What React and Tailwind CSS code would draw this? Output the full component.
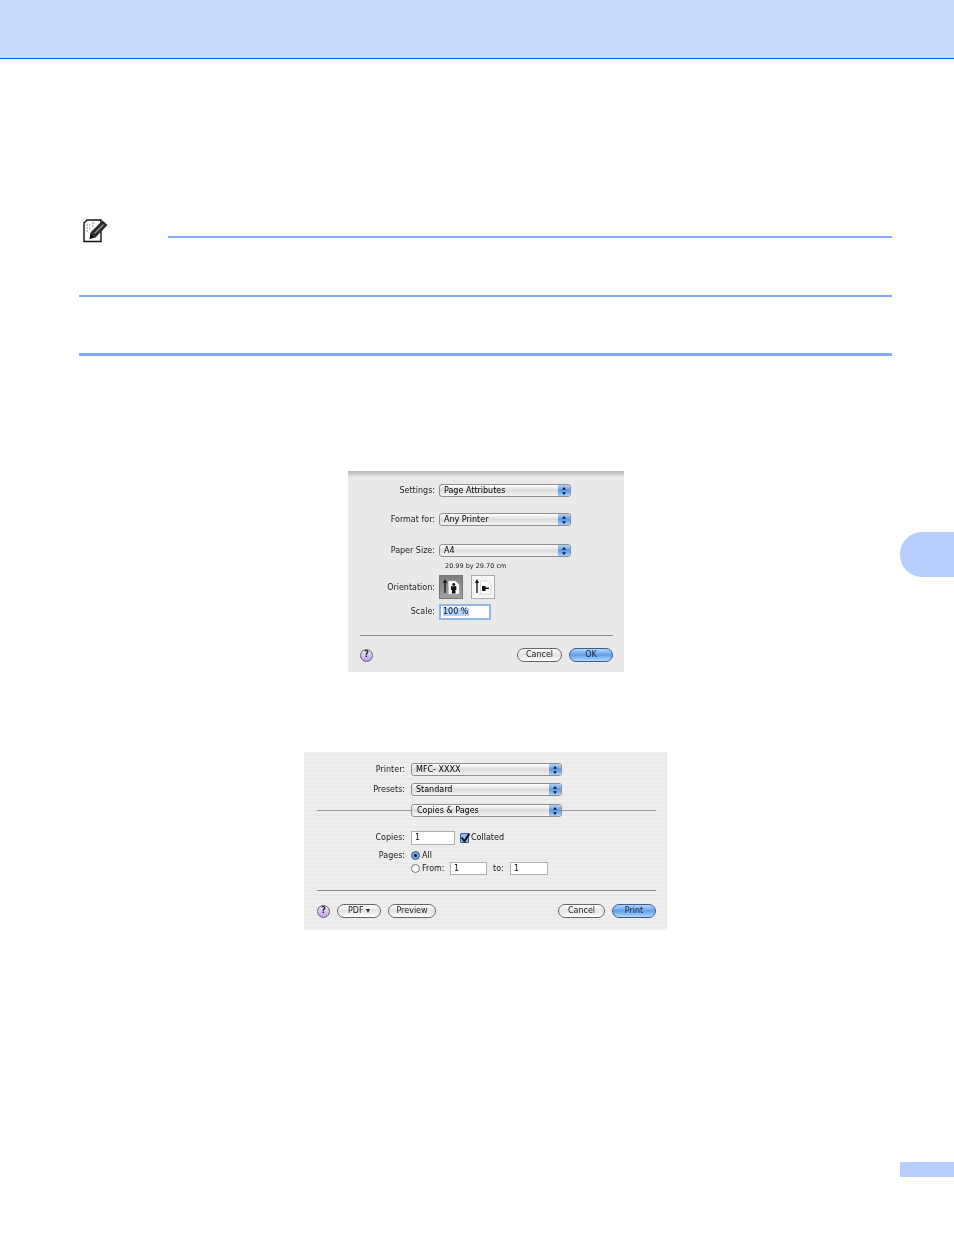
const font = 'font-["DejaVu_Sans",sans-serif]';

function Stepper() {
  return (
    <span className="flex w-[12px] h-full flex-col items-center justify-center rounded-r-[3px] bg-linear-to-b from-[#b3d1f4] via-[#5c9be4] to-[#a8ccf3]">
      <svg width="6" height="10" viewBox="0 0 6 10">
        <path d="M3 1 L5 3.8 H1 Z M3 9 L5 6.2 H1 Z" fill="#0c1a30" />
      </svg>
    </span>
  );
}

function Select({ text, width, pad = 'pl-[4px]' }) {
  return (
    <div
      className={`flex h-[13px] items-center justify-between rounded-[3px] border border-[#8f8f8f] bg-linear-to-b from-white via-[#dcdcdc] to-[#f4f4f4] ${pad} ${width}`}
    >
      <span className="text-[8px] leading-none text-[#000]">{text}</span>
      <Stepper />
    </div>
  );
}

function Label({ children, width, extra }) {
  return <span className={`shrink-0 text-right text-[8px] leading-none text-[#1c1c1c] ${width} ${extra || ''}`}>{children}</span>;
}

function Pill({ children, width, primary }) {
  return (
    <div
      className={`flex h-[14px] items-center justify-center rounded-full border text-[8px] leading-none ${width} ${
        primary
          ? 'border-[#3b5f92] bg-linear-to-b from-[#b8d4f5] via-[#5da0ea] to-[#b5d8fa] text-[#142642]'
          : 'border-[#666] bg-linear-to-b from-white via-[#e4e4e4] to-white text-[#222]'
      }`}
    >
      {children}
    </div>
  );
}

function Help() {
  return (
    <div className="flex h-[13px] w-[13px] shrink-0 items-center justify-center rounded-full border border-[#666] bg-linear-to-b from-[#f3ebfc] to-[#bb9bea] text-[8px] font-bold leading-none text-[#222]">
      ?
    </div>
  );
}

function Field({ children, width, height = 'h-[14px]', focus }) {
  return (
    <div
      className={`flex items-center text-[8px] leading-none text-[#111] bg-white ${height} ${width} ${
        focus ? 'border-2 border-[#8db8ea] pl-[2px]' : 'border border-[#b0b0b0] pl-[3px]'
      }`}
    >
      {children}
    </div>
  );
}

function OrientButton({ active, landscape, extra }) {
  return (
    <div
      className={`flex h-[24px] w-[24px] items-center justify-center border ${extra || ''} ${
        active ? 'border-[#777] bg-linear-to-b from-[#7f7f7f] to-[#a0a0a0]' : 'border-[#aaa] bg-[#f6f6f6]'
      }`}
    >
      <svg width="20" height="18" viewBox="0 0 20 18">
        <path d="M4 15 V4" stroke="#111" strokeWidth="1.3" />
        <path d="M4 1 L6 5 H2 Z" fill="#111" />
        <path d="M7.5 3 H14.5 L18 6.5 V16 H7.5 Z" fill="#fff" stroke="#c4c4c4" strokeWidth="0.6" />
        {landscape ? (
          <path d="M9 8 H12.5 V9.5 H16 V11 H12.5 V13 H9 Z" fill="#111" />
        ) : (
          <g fill="#111">
            <circle cx="12.7" cy="6.5" r="1.4" />
            <path d="M10 8.3 H15.4 V12 H14.5 V15.5 H10.9 V12 H10 Z" />
          </g>
        )}
      </svg>
    </div>
  );
}

function PageDialog() {
  const lw = 'w-[87px]';
  return (
    <div className="ml-[348px] flex h-[201px] w-[276px] flex-col bg-[#e9e9e9] bg-linear-to-b from-[#b5b5b5] from-0% to-[#e9e9e9] to-[3%] pt-[13px]">
      <div className="flex items-center gap-[4px]">
        <Label width={lw}>Settings:</Label>
        <Select text="Page Attributes" width="w-[132px]" />
      </div>
      <div className="mt-[16px] flex items-center gap-[4px]">
        <Label width={lw}>Format for:</Label>
        <Select text="Any Printer" width="w-[132px]" />
      </div>
      <div className="mt-[18px] flex items-center gap-[4px]">
        <Label width={lw}>Paper Size:</Label>
        <Select text="A4" width="w-[132px]" />
      </div>
      <div className="mt-[5px] pl-[97px] text-[6.5px] leading-[8px] text-[#222]">20.99 by 29.70 cm</div>
      <div className="mt-[5px] flex items-center gap-[4px]">
        <Label width={lw} extra="pt-[2px]">Orientation:</Label>
        <OrientButton active />
        <OrientButton landscape extra="ml-[4px]" />
      </div>
      <div className="mt-[5px] flex items-center gap-[4px]">
        <Label width={lw}>Scale:</Label>
        <Field width="w-[52px]" height="h-[16px]" focus>
          <span className="bg-[#b5d3f7] pr-[1px]">100 %</span>
        </Field>
      </div>
      <div className="mx-[12px] mt-[15px] h-px w-[253px] bg-[#8a8a8a]" />
      <div className="mt-[12px] flex items-center justify-between pl-[12px] pr-[11px]">
        <Help />
        <div className="flex gap-[7px]">
          <Pill width="w-[45px]">Cancel</Pill>
          <Pill width="w-[44px]" primary>
            OK
          </Pill>
        </div>
      </div>
    </div>
  );
}

function PrintDialog() {
  const lw = 'w-[101px]';
  return (
    <div className="mt-[80px] ml-[304px] flex h-[178px] w-[363px] flex-col bg-[#eeeeee] bg-[repeating-linear-gradient(0deg,#eeeeee_0,#eeeeee_2px,#eaeaea_2px,#eaeaea_4px)] pt-[11px]">
      <div className="flex items-center gap-[6px]">
        <Label width={lw}>Printer:</Label>
        <Select text="MFC- XXXX" width="w-[151px]" />
      </div>
      <div className="mt-[7px] flex items-center gap-[6px]">
        <Label width={lw}>Presets:</Label>
        <Select text="Standard" width="w-[151px]" />
      </div>
      <div className="mt-[8px] flex items-center pl-[13px] pr-[11px]">
        <div className="h-px flex-1 bg-[#999]" />
        <Select text="Copies &amp; Pages" width="w-[151px]" pad="pl-[5px]" />
        <div className="h-px flex-1 bg-[#999]" />
      </div>
      <div className="mt-[14px] flex items-center gap-[6px]">
        <Label width={lw}>Copies:</Label>
        <Field width="w-[44px]">1</Field>
        <div className="ml-[-1px] flex items-center gap-[2px]">
          <div className="mt-[-1px] flex h-[10px] w-[9px] items-center justify-center rounded-[1px] border border-[#3a5f94] bg-[#8fbaee]">
            <svg width="10" height="10" viewBox="0 0 9 9" className="shrink-0">
              <path d="M1.5 4 L4 7.5 L8.5 0.5" fill="none" stroke="#111" strokeWidth="1.7" />
            </svg>
          </div>
          <span className="text-[8px] leading-none text-[#111]">Collated</span>
        </div>
      </div>
      <div className="mt-[6px] flex items-center gap-[6px]">
        <Label width={lw}>Pages:</Label>
        <div className="flex items-center gap-[2px]">
          <div className="flex h-[9px] w-[9px] items-center justify-center rounded-full border border-[#3a5f94] bg-[#6ea6e8]">
            <div className="h-[3px] w-[3px] rounded-full bg-[#111]" />
          </div>
          <span className="text-[8px] leading-none text-[#111]">All</span>
        </div>
      </div>
      <div className="mt-[2px] flex items-center pl-[107px]">
        <div className="h-[9px] w-[9px] rounded-full border border-[#777] bg-white" />
        <span className="ml-[2px] w-[28px] text-[8px] leading-none text-[#1c1c1c]">From:</span>
        <Field width="w-[37px]" height="h-[13px]">1</Field>
        <span className="ml-[6px] w-[17px] text-[8px] leading-none text-[#1c1c1c]">to:</span>
        <Field width="w-[38px]" height="h-[13px]">1</Field>
      </div>
      <div className="ml-[13px] mt-[15px] h-px w-[339px] bg-[#8a8a8a]" />
      <div className="mt-[13px] flex items-center justify-between pl-[13px] pr-[11px]">
        <div className="flex items-center gap-[7px]">
          <Help />
          <Pill width="w-[44px]">PDF ▾</Pill>
          <Pill width="w-[48px]">Preview</Pill>
        </div>
        <div className="flex gap-[7px]">
          <Pill width="w-[47px]">Cancel</Pill>
          <Pill width="w-[44px]" primary>
            Print
          </Pill>
        </div>
      </div>
    </div>
  );
}

function NoteIcon() {
  return (
    <svg width="26" height="25" viewBox="0 0 26 25" className="shrink-0">
      <path d="M5 1 H19 V22.5 H2 V4 Z" fill="#fff" stroke="#111" strokeWidth="1.4" />
      <path d="M4.5 6 H8 M4.5 9 H8 M4.5 12 H7 M10 4 H13 M10 7 H12" stroke="#777" strokeWidth="1" strokeDasharray="1.5 1" />
      <path d="M8.5 13.5 L20.5 1.5 L25.5 6 L13.5 18.5 Z" fill="#2a2a2a" />
      <path d="M12 14 L21 5 L22 6 L13 15 Z" fill="#8f8f8f" />
      <path d="M8.5 13.5 L13.5 18.5 L7.5 20 Z" fill="#111" />
    </svg>
  );
}

export default function App() {
  return (
    <div className={`relative h-[1235px] w-[954px] overflow-hidden bg-white ${font}`}>
      <header className="h-[59px] border-b border-[#0a56f5] bg-[#c9dbfc]" />
      <main>
        <div className="ml-[82px] mr-[62px] mt-[160px] flex items-start">
          <NoteIcon />
          <div className="ml-[60px] mt-[17px] h-[2px] flex-1 bg-[#80abff]" />
        </div>
        <div className="ml-[79px] mr-[62px] mt-[51px] h-[2px] bg-[#80abff]" />
        <div className="ml-[79px] mr-[62px] mt-[56px] h-[3px] bg-[#80abff]" />
        <div className="mt-[115px] blur-[0.35px]">
          <PageDialog />
          <PrintDialog />
        </div>
      </main>
      <div className="absolute right-0 top-[532px] h-[45px] w-[54px] rounded-l-[22px] bg-[#b6cefe]" />
      <div className="absolute right-0 top-[1162px] h-[15px] w-[54px] bg-[#b6cefe]" />
    </div>
  );
}
